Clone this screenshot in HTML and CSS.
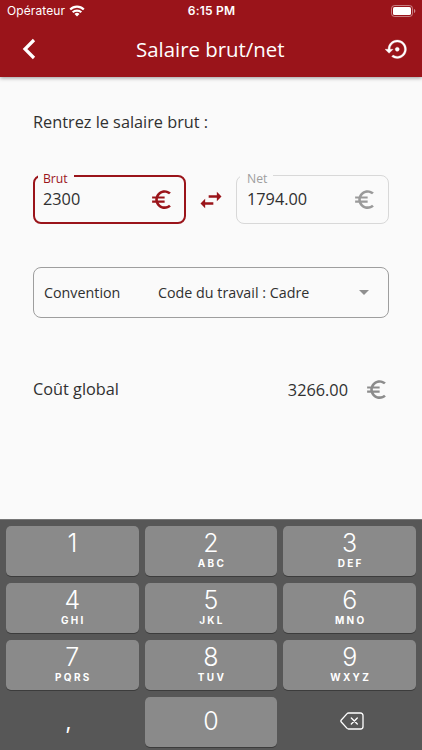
FILE: index.html
```html
<!DOCTYPE html>
<html lang="fr">
<head>
    <meta charset="UTF-8">
    <meta name="viewport" content="width=device-width, initial-scale=1.0">
    <title>Salaire brut/net</title>
    <link rel="stylesheet" href="styles.css">
</head>
<body>
    <!-- euro icon used three times -->
    <svg class="defs" width="0" height="0">
        <symbol id="euro" viewBox="0 0 24 24">
            <path d="M15 18.5c-2.51 0-4.68-1.42-5.76-3.5H15v-2H8.58c-.05-.33-.08-.66-.08-1s.03-.67.08-1H15V9H9.24C10.32 6.92 12.5 5.5 15 5.5c1.61 0 3.09.59 4.23 1.57L21 5.3C19.41 3.87 17.3 3 15 3c-3.92 0-7.24 2.51-8.48 6H3v2h3.06c-.04.33-.06.66-.06 1s.02.67.06 1H3v2h3.52c1.24 3.49 4.56 6 8.48 6 2.31 0 4.41-.87 6-2.3l-1.78-1.77c-1.13.98-2.6 1.57-4.22 1.57z"/>
        </symbol>
    </svg>

    <header class="header">
        <div class="status-bar">
            <div class="carrier">
                <span>Opérateur</span>
                <svg width="16" height="12" viewBox="0 0 16 12" fill="none" stroke="#fff" stroke-width="2.2">
                    <path d="M1.2 4.5a9.6 9.6 0 0 1 13.6 0"/>
                    <path d="M3.7 7.3a6.1 6.1 0 0 1 8.6 0"/>
                    <path d="M8 11.5L5.5 9a3.6 3.6 0 0 1 5 0z" fill="#fff" stroke="none"/>
                </svg>
            </div>
            <div class="time">6:15 PM</div>
            <svg class="battery" width="25" height="12" viewBox="0 0 25 12">
                <rect x=".5" y=".5" width="21" height="11" rx="3" fill="none" stroke="#fff" stroke-opacity=".45"/>
                <rect x="2" y="2" width="18" height="8" rx="1.6" fill="#fff"/>
                <path d="M23 4v4c.8-.3 1.3-1.1 1.3-2S23.8 4.3 23 4z" fill="#fff" fill-opacity=".5"/>
            </svg>
        </div>
        <div class="app-bar">
            <svg class="back" width="14" height="22" viewBox="0 0 14 22" fill="none" stroke="#fff" stroke-width="3.2">
                <path d="M12 2L3 11l9 9"/>
            </svg>
            <h1 class="title">Salaire brut/net</h1>
            <svg class="restore" width="24.5" height="24.5" viewBox="0 0 24 24" fill="#fff" stroke="#fff" stroke-width=".3">
                <path d="M14 12c0-1.1-.9-2-2-2s-2 .9-2 2 .9 2 2 2 2-.9 2-2zm-2-9c-4.97 0-9 4.03-9 9H0l4 4 4-4H5c0-3.87 3.13-7 7-7s7 3.13 7 7-3.13 7-7 7c-1.51 0-2.91-.49-4.06-1.3l-1.42 1.44C8.04 20.3 9.94 21 12 21c4.97 0 9-4.03 9-9s-4.03-9-9-9z"/>
            </svg>
        </div>
    </header>

    <main class="content">
        <p class="intro">Rentrez le salaire brut :</p>

        <div class="fields">
            <div class="field active">
                <span class="label">Brut</span>
                <span class="value">2300</span>
                <svg class="euro"><use href="#euro"/></svg>
            </div>
            <svg class="swap" width="28" height="28" viewBox="0 0 24 24">
                <path d="M6.99 11L3 15l3.99 4v-3H14v-2H6.99v-3zM21 9l-3.99-4v3H10v2h7.01v3L21 9z"/>
            </svg>
            <div class="field">
                <span class="label">Net</span>
                <span class="value">1794.00</span>
                <svg class="euro"><use href="#euro"/></svg>
            </div>
        </div>

        <div class="convention">
            <span class="convention-name">Convention</span>
            <span class="convention-value">Code du travail : Cadre</span>
            <span class="caret"></span>
        </div>

        <div class="total">
            <span class="total-name">Coût global</span>
            <span class="total-value">3266.00</span>
            <svg class="euro"><use href="#euro"/></svg>
        </div>
    </main>

    <div class="keyboard">
        <div class="key"><b>1</b></div>
        <div class="key"><b>2</b><small>ABC</small></div>
        <div class="key"><b>3</b><small>DEF</small></div>
        <div class="key"><b>4</b><small>GHI</small></div>
        <div class="key"><b>5</b><small>JKL</small></div>
        <div class="key"><b>6</b><small>MNO</small></div>
        <div class="key"><b>7</b><small>PQRS</small></div>
        <div class="key"><b>8</b><small>TUV</small></div>
        <div class="key"><b>9</b><small>WXYZ</small></div>
        <div class="key plain comma"><b>,</b></div>
        <div class="key zero"><b>0</b></div>
        <div class="key plain delete">
            <svg width="24" height="18" viewBox="0 0 24 18" fill="none" stroke="#fff" stroke-width="1.3" stroke-linejoin="round" stroke-linecap="round">
                <path d="M8.5 1h12a2.5 2.5 0 0 1 2.5 2.5v11a2.5 2.5 0 0 1-2.5 2.5h-12q-.8 0-1.4-.6L1.3 10q-.9-1 0-2l5.8-6.4q.6-.6 1.4-.6z"/>
                <path d="M11.3 6l6 6M17.3 6l-6 6"/>
            </svg>
        </div>
    </div>
</body>
</html>
```
FILE: styles.css
```css
* {
    box-sizing: border-box;
}

body {
    margin: 0;
    width: 422px;
    height: 750px;
    overflow: hidden;
    display: flex;
    flex-direction: column;
    background-color: #fafafa;
    color: #303030;
    font-family: 'Open Sans', sans-serif;
}

.defs {
    position: absolute;
}

.header {
    height: 77px;
    background-color: #9a141a;
    color: white;
    box-shadow: 0 1px 4px rgba(0, 0, 0, 0.4);
}

.status-bar {
    display: grid;
    grid-template-columns: 1fr auto 1fr;
    align-items: center;
    height: 21px;
    padding: 0 6px 0 7px;
    font-family: Inter, sans-serif;
    font-size: 12px;
}

.carrier {
    display: flex;
    align-items: center;
    gap: 4px;
    letter-spacing: 0.1px;
}

.time {
    font-weight: 600;
    letter-spacing: 0.2px;
}

.battery {
    justify-self: end;
}

.app-bar {
    display: flex;
    align-items: center;
    justify-content: space-between;
    height: 56px;
    padding: 0 13px 0 22px;
}

.title {
    margin: 0;
    font-size: 20.4px;
    font-weight: 400;
}

.content {
    height: 442px;
    padding: 33px 33px 0;
}

.intro {
    margin: 0;
    font-size: 16.3px;
    line-height: 24px;
}

.fields {
    display: flex;
    align-items: center;
    justify-content: space-between;
    height: 49px;
    margin-top: 41px;
}

.field {
    position: relative;
    display: flex;
    align-items: center;
    justify-content: space-between;
    width: 153px;
    height: 49px;
    padding: 0 11px 0 10px;
    border: 1px solid #d8d8d8;
    border-radius: 8px;
}

.field.active {
    padding: 0 10px 0 8px;
    border: 2px solid #9a141a;
}

/* sits on the top border */
.label {
    position: absolute;
    top: -5px;
    left: 3px;
    padding: 0 6px 0 7px;
    background-color: #fafafa;
    color: #9e9e9e;
    font-size: 12.2px;
    line-height: 16px;
}

.active .label {
    top: -6px;
    left: 3px;
    padding-left: 5px;
    color: #9a141a;
}

.value {
    padding-bottom: 2px;
    font-size: 16.3px;
}

.euro {
    width: 25px;
    height: 25px;
    fill: #9a9a9a;
}

.active .euro,
.swap {
    fill: #9a141a;
}

.convention {
    display: flex;
    align-items: center;
    height: 51px;
    margin-top: 43px;
    padding: 0 19px 0 10px;
    border: 1px solid #9e9e9e;
    border-radius: 8px;
    font-size: 14.3px;
}

.convention-name {
    width: 114px;
}

.caret {
    margin-left: auto;
    border: 5px solid transparent;
    border-top-color: #8f8f8f;
    border-bottom: none;
}

.total {
    display: flex;
    align-items: center;
    margin-top: 59px;
    font-size: 16.3px;
}

.total-name {
    padding-bottom: 2px;
}

.total-value {
    margin-left: auto;
    margin-right: 16px;
}

.total .euro {
    fill: #8c8c8c;
}

.keyboard {
    display: grid;
    grid-template-columns: repeat(3, 1fr);
    grid-auto-rows: 50px;
    gap: 7px 6px;
    height: 231px;
    padding: 6px 6px 0;
    border-top: 1px solid #777;
    background-color: #575757;
    color: white;
    font-family: Inter, sans-serif;
}

.key {
    display: flex;
    flex-direction: column;
    align-items: center;
    padding-top: 3px;
    border-radius: 5px;
    background-color: #8a8a8a;
    box-shadow: 0 1px 0 #3c3c3c;
}

.key b {
    font-size: 25px;
    font-weight: 300;
    line-height: 28px;
}

.key small {
    margin-left: 2px;
    font-size: 10px;
    font-weight: 700;
    line-height: 12px;
    letter-spacing: 2.3px;
}

.key.zero,
.key.plain {
    justify-content: center;
    padding: 0 0 3px;
}

.key.plain {
    background: none;
    box-shadow: none;
}

.key.comma {
    padding: 0 8px 3px 0;
}

.key.comma b {
    font-size: 22px;
    font-weight: 400;
}

.key.delete {
    padding-left: 5px;
}
```
